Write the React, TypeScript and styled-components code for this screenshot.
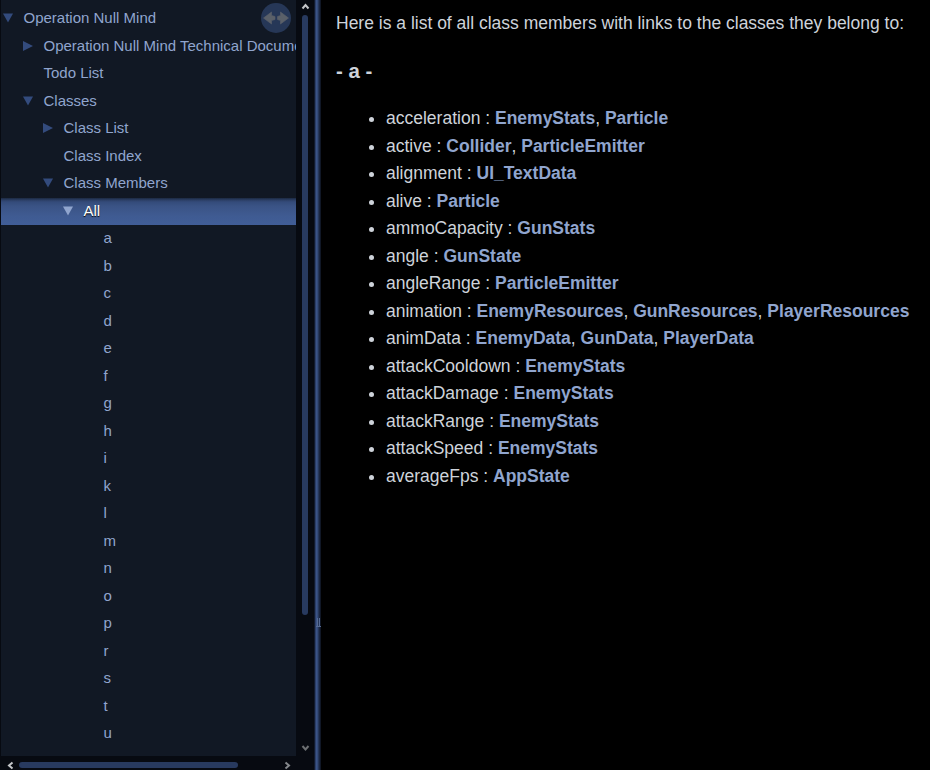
import React from "react";
import styled, { createGlobalStyle } from "styled-components";

const GlobalStyle = createGlobalStyle`
  * { box-sizing: border-box; }
  body { margin: 0; background: #000; overflow: hidden; }
`;

const Page = styled.div`
  display: flex;
  width: 930px;
  height: 770px;
  overflow: hidden;
  background: #000;
  font-family: "Liberation Sans", Arial, sans-serif;
`;

const SideNav = styled.nav`
  display: grid;
  grid-template: 756px 14px / 295px 18px;
  width: 314px;
  flex: none;
  padding-left: 1px;
  background: #070a11;
`;

const Tree = styled.div`
  position: relative;
  padding-top: 5px;
  overflow: hidden;
  background: #111824;
`;

const SyncButton = styled.span`
  position: absolute;
  top: 3px;
  left: 260px;
  width: 30px;
  height: 30px;
  svg { display: block; }
`;

const TreeRow = styled.div<{ $level: number; $selected?: boolean }>`
  display: flex;
  align-items: center;
  height: 27.5px;
  padding-left: ${(p) => p.$level * 20 + 1}px;
  font-size: 15px;
  line-height: 27.5px;
  white-space: nowrap;
  color: ${(p) => (p.$selected ? "#fff" : "#90a5ce")};
  text-shadow: ${(p) => (p.$selected ? "0 1px 1px #000" : "none")};
  background: ${(p) =>
    p.$selected
      ? "linear-gradient(#1c2942 0, #2b3e65 2px, #344b7a 4px, #3a5385 8px, #3f5b92 18px, #415e98 28px)"
      : "none"};
`;

const ArrowSlot = styled.span<{ $selected?: boolean }>`
  display: flex;
  flex: none;
  width: 21.5px;
  color: ${(p) => (p.$selected ? "#90a5ce" : "#334b7d")};
  svg { margin-top: -1px; }
`;

const Label = styled.span`
  margin-top: -2px;
`;

const VerticalBar = styled.div`
  display: flex;
  flex-direction: column;
  align-items: center;
  padding-top: 2px;
  svg { display: block; }
`;

const VerticalThumb = styled.div`
  width: 6px;
  height: 600px;
  margin: 4px 0 128px;
  border-radius: 3px;
  background: #283a5f;
`;

const HorizontalBar = styled.div`
  display: flex;
  align-items: center;
  padding: 4px 0 0 5px;
  svg { display: block; }
`;

const HorizontalThumb = styled.div`
  width: 219px;
  height: 6px;
  margin: 0 45px 0 4px;
  border-radius: 3px;
  background: #283a5f;
`;

const Splitter = styled.div`
  display: flex;
  flex: none;
  justify-content: flex-end;
  width: 7px;
  padding-top: 617px;
  background: linear-gradient(
    to right,
    #121b2e 0 1px, #2b3e67 1px 2px, #3b5488 2px 3px, #344b79 3px 4px,
    #26375b 4px 5px, #1b2741 5px 6px, #101726 6px 7px
  );
`;

const Content = styled.main`
  flex: 1;
  padding: 10px 0 0 15px;
  overflow: hidden;
  white-space: nowrap;
  color: #ced3da;
  font-size: 17.5px;
  line-height: 27.5px;
`;

const Intro = styled.p`
  margin: 0;
`;

const Heading = styled.h3`
  margin: 19px 0 0;
  font-size: 20.475px;
  line-height: 27px;
`;

const MemberList = styled.ul`
  margin: 21.5px 0 0;
  padding-left: 33px;
  list-style: none;
`;

const Member = styled.li`
  display: flex;
  height: 27.5px;
  &::before {
    content: "";
    width: 5px;
    height: 5px;
    margin: 12px 12px 0 0;
    border-radius: 50%;
    background: #ced3da;
  }
`;

const ClassLink = styled.a`
  color: #90a5ce;
  font-weight: bold;
`;

type Arrow = "open" | "closed";
interface Node { label: string; level: number; arrow?: Arrow; selected?: boolean }

const nodes: Node[] = [
  { label: "Operation Null Mind", level: 0, arrow: "open" },
  { label: "Operation Null Mind Technical Documentation", level: 1, arrow: "closed" },
  { label: "Todo List", level: 1 },
  { label: "Classes", level: 1, arrow: "open" },
  { label: "Class List", level: 2, arrow: "closed" },
  { label: "Class Index", level: 2 },
  { label: "Class Members", level: 2, arrow: "open" },
  { label: "All", level: 3, arrow: "open", selected: true },
  ..."abcdefghiklmnoprstu".split("").map((label) => ({ label, level: 4 })),
];

const members: [string, string[]][] = [
  ["acceleration", ["EnemyStats", "Particle"]],
  ["active", ["Collider", "ParticleEmitter"]],
  ["alignment", ["UI_TextData"]],
  ["alive", ["Particle"]],
  ["ammoCapacity", ["GunStats"]],
  ["angle", ["GunState"]],
  ["angleRange", ["ParticleEmitter"]],
  ["animation", ["EnemyResources", "GunResources", "PlayerResources"]],
  ["animData", ["EnemyData", "GunData", "PlayerData"]],
  ["attackCooldown", ["EnemyStats"]],
  ["attackDamage", ["EnemyStats"]],
  ["attackRange", ["EnemyStats"]],
  ["attackSpeed", ["EnemyStats"]],
  ["averageFps", ["AppState"]],
];

const TreeArrow = ({ kind }: { kind: Arrow }) => (
  <svg width="12" height="12" viewBox="0 0 12 12">
    <path d={kind === "open" ? "M1 1.5H11L6 10.5Z" : "M1 1V11L11 6Z"} fill="currentColor" />
  </svg>
);

const chevrons = {
  up: "M1.5 6.5L4.5 3L7.5 6.5",
  down: "M1.5 3L4.5 6.5L7.5 3",
  left: "M6.5 1.5L3 4.5L6.5 7.5",
  right: "M2.5 1.5L6 4.5L2.5 7.5",
};

const Chevron = ({ dir, color }: { dir: keyof typeof chevrons; color: string }) => (
  <svg width="9" height="9" viewBox="0 0 9 9">
    <path d={chevrons[dir]} fill="none" stroke={color} strokeWidth="2" />
  </svg>
);

export default function App() {
  return (
    <>
      <GlobalStyle />
      <Page>
        <SideNav>
          <Tree>
            {nodes.map((n) => (
              <TreeRow key={n.label} $level={n.level} $selected={n.selected}>
                <ArrowSlot $selected={n.selected}>{n.arrow && <TreeArrow kind={n.arrow} />}</ArrowSlot>
                <Label>{n.label}</Label>
              </TreeRow>
            ))}
            <SyncButton>
              <svg width="30" height="30" viewBox="0 0 30 30">
                <circle cx="15" cy="15" r="15" fill="#263757" />
                <path
                  d="M2.5 15L10.5 9V12.5L14 13.5V16.5L10.5 17.5V21ZM27.5 15L19.5 9V12.5L16.5 13.5V16.5L19.5 17.5V21Z"
                  fill="#5a6069"
                  stroke="#5a6069"
                  strokeWidth="0.6"
                />
              </svg>
            </SyncButton>
          </Tree>
          <VerticalBar>
            <Chevron dir="up" color="#c4c6c9" />
            <VerticalThumb />
            <Chevron dir="down" color="#6c6f72" />
          </VerticalBar>
          <HorizontalBar>
            <Chevron dir="left" color="#c4c6c9" />
            <HorizontalThumb />
            <Chevron dir="right" color="#85888c" />
          </HorizontalBar>
        </SideNav>
        <Splitter>
          <svg width="5" height="11" viewBox="0 0 5 11">
            <path d="M1.5 1V10M3.5 1V10M0 9.5H5" stroke="#566b94" strokeWidth="1" fill="none" />
          </svg>
        </Splitter>
        <Content>
          <Intro>Here is a list of all class members with links to the classes they belong to:</Intro>
          <Heading>- a -</Heading>
          <MemberList>
            {members.map(([name, classes]) => (
              <Member key={name}>
                <span>
                  {name} :{" "}
                  {classes.map((c, i) => (
                    <React.Fragment key={c}>
                      {i > 0 && ", "}
                      <ClassLink>{c}</ClassLink>
                    </React.Fragment>
                  ))}
                </span>
              </Member>
            ))}
          </MemberList>
        </Content>
      </Page>
    </>
  );
}
